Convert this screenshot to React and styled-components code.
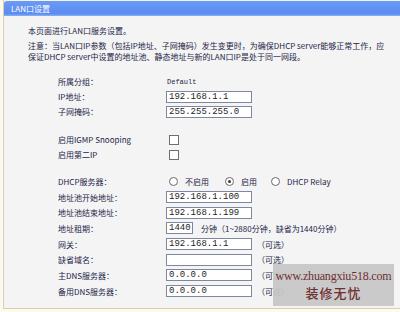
import React from "react";
import styled, { createGlobalStyle } from "styled-components";

const GlobalStyle = createGlobalStyle`
  html, body {
    margin: 0;
    padding: 0;
    background: #ffffff;
  }
  body {
    font-family: "Noto Sans CJK SC", "DejaVu Sans", sans-serif;
  }
`;

const Page = styled.div`
  position: relative;
  width: 400px;
  height: 312px;
  overflow: hidden;
  background: #fbf9f1;
`;

const Frame = styled.div`
  margin-left: 3px;
  height: 309px;
  border-left: 1px solid #dcd0a2;
  border-bottom: 1px solid #dcd0a2;
  box-sizing: border-box;
  background: #f4f4f4;
  display: flex;
  flex-direction: column;
`;

const TitleBar = styled.div`
  height: 15px;
  margin-top: 1px;
  border-top-left-radius: 3px;
  background: linear-gradient(#6b9af4, #5a8cf2 85%, #8fb2f0);
  color: #ffffff;
  font-size: 8px;
  line-height: 15px;
  padding-left: 7px;
`;

const Body = styled.div`
  padding: 9px 0 0 24px;
  color: #1d2448;
  font-size: 8px;
`;

const Intro = styled.p`
  margin: 0;
  line-height: 11px;
`;

const Note = styled.p`
  margin: 4px 0 0;
  line-height: 11px;
  width: 360px;
`;

const Section = styled.div`
  display: grid;
  grid-template-columns: 108px auto;
  grid-auto-rows: ${(p) => p.$row}px;
  align-items: center;
  margin-left: 30px;
  margin-top: ${(p) => p.$gap}px;
`;

const Label = styled.div`
  white-space: nowrap;
`;

const Value = styled.div`
  display: flex;
  align-items: center;
`;

const Plain = styled.span`
  font-family: "Liberation Mono", monospace;
  font-size: 7px;
  margin-left: 1px;
`;

const Field = styled.input`
  box-sizing: border-box;
  width: ${(p) => p.$w || 86}px;
  height: 12px;
  margin: 0;
  padding: 0 1px 0 2px;
  border: 1px solid #7d879f;
  background: #ffffff;
  font-family: "Liberation Mono", monospace;
  font-size: 9px;
  color: #1e1e1e;
  outline: none;
`;

const Hint = styled.span`
  margin-left: ${(p) => p.$ml}px;
  white-space: nowrap;
`;

const Check = styled.span`
  display: inline-block;
  box-sizing: border-box;
  width: 10px;
  height: 10px;
  margin-left: 3px;
  border: 1px solid #6f6f6f;
  background: #ffffff;
`;

const RadioGroup = styled.div`
  display: flex;
  align-items: center;
`;

const Radio = styled.span`
  position: relative;
  display: inline-block;
  box-sizing: border-box;
  width: 9px;
  height: 9px;
  border-radius: 50%;
  border: 1px solid #6a6a6a;
  background: #ffffff;
  margin-left: ${(p) => p.$ml}px;
  margin-right: 7px;

  &::after {
    content: "";
    display: ${(p) => (p.$on ? "block" : "none")};
    position: absolute;
    left: 2px;
    top: 2px;
    width: 3px;
    height: 3px;
    border-radius: 50%;
    background: #3a3a3a;
  }
`;

const Watermark = styled.div`
  position: absolute;
  left: 273px;
  top: 264px;
  width: 121px;
  height: 42px;
  background: rgba(198, 198, 198, 0.93);
  color: #6e2f30;
  display: flex;
  flex-direction: column;
  align-items: center;
  justify-content: center;
`;

const MarkUrl = styled.div`
  font-family: "Liberation Serif", serif;
  font-size: 12px;
  line-height: 15px;
  letter-spacing: -0.2px;
`;

const MarkName = styled.div`
  font-family: "Noto Sans CJK SC", sans-serif;
  font-weight: 500;
  font-size: 13px;
  line-height: 18px;
  letter-spacing: 1px;
`;

const App = () => {
  return (
    <Page>
      <GlobalStyle />
      <Frame>
        <TitleBar>LAN口设置</TitleBar>
        <Body>
          <Intro>本页面进行LAN口服务设置。</Intro>
          <Note>
            注意：当LAN口IP参数（包括IP地址、子网掩码）发生变更时，为确保DHCP server能够正常工作，应保证DHCP
            server中设置的地址池、静态地址与新的LAN口IP是处于同一网段。
          </Note>

          <Section $row={15} $gap={12}>
            <Label>所属分组：</Label>
            <Value>
              <Plain>Default</Plain>
            </Value>
            <Label>IP地址：</Label>
            <Value>
              <Field readOnly defaultValue="192.168.1.1" />
            </Value>
            <Label>子网掩码：</Label>
            <Value>
              <Field readOnly defaultValue="255.255.255.0" />
            </Value>
          </Section>

          <Section $row={15} $gap={13}>
            <Label>启用IGMP Snooping</Label>
            <Value>
              <Check />
            </Value>
            <Label>启用第二IP</Label>
            <Value>
              <Check />
            </Value>
          </Section>

          <Section $row={15.7} $gap={11.5}>
            <Label>DHCP服务器：</Label>
            <RadioGroup>
              <Radio $ml={3} />
              不启用
              <Radio $ml={16} $on />
              启用
              <Radio $ml={14} />
              DHCP Relay
            </RadioGroup>
            <Label>地址池开始地址：</Label>
            <Value>
              <Field readOnly defaultValue="192.168.1.100" />
            </Value>
            <Label>地址池结束地址：</Label>
            <Value>
              <Field readOnly defaultValue="192.168.1.199" />
            </Value>
            <Label>地址租期：</Label>
            <Value>
              <Field $w={27} readOnly defaultValue="1440" />
              <Hint $ml={8}>分钟（1~2880分钟，缺省为1440分钟）</Hint>
            </Value>
            <Label>网关：</Label>
            <Value>
              <Field readOnly defaultValue="192.168.1.1" />
              <Hint $ml={5}>（可选）</Hint>
            </Value>
            <Label>缺省域名：</Label>
            <Value>
              <Field readOnly defaultValue="" />
              <Hint $ml={5}>（可选）</Hint>
            </Value>
            <Label>主DNS服务器：</Label>
            <Value>
              <Field readOnly defaultValue="0.0.0.0" />
              <Hint $ml={5}>（可选）</Hint>
            </Value>
            <Label>备用DNS服务器：</Label>
            <Value>
              <Field readOnly defaultValue="0.0.0.0" />
              <Hint $ml={5}>（可选）</Hint>
            </Value>
          </Section>
        </Body>
      </Frame>
      <Watermark>
        <MarkUrl>www.zhuangxiu518.com</MarkUrl>
        <MarkName>装修无忧</MarkName>
      </Watermark>
    </Page>
  );
};

export default App;
